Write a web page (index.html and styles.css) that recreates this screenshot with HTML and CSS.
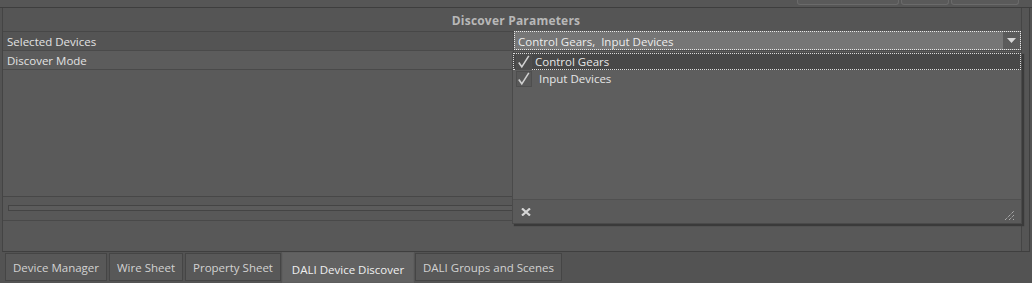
FILE: index.html
```html
<!DOCTYPE html>
<html>
<head>
<meta charset="utf-8">
<link rel="stylesheet" href="styles.css">
</head>
<body>
<div class="app">
  <div class="topbar">
    <div class="tbtn b1"></div>
    <div class="tbtn b2"></div>
    <div class="tbtn b3"></div>
  </div>
  <div class="panel">
    <div class="main">
      <div class="title">Discover Parameters</div>
      <div class="row r1">
        <div class="label">Selected Devices</div>
        <div class="value">
          <div class="combo">
            <span class="combo-text">Control Gears,&nbsp; Input Devices</span>
            <span class="combo-arrow"><svg width="9" height="5" viewBox="0 0 9 5"><path d="M0 0h9L4.5 5z" fill="#d8d8d8"/></svg></span>
          </div>
        </div>
      </div>
      <div class="row r2">
        <div class="label">Discover Mode</div>
        <div class="value"></div>
      </div>
      <div class="empty">
        <div class="lcol"></div>
        <div class="rcol"></div>
      </div>
      <div class="hscroll"><div class="track"></div></div>
      <div class="gap"></div>
    </div>
    <div class="vstrip"></div>
  </div>
  <div class="tabs">
    <div class="tab t1">Device Manager</div>
    <div class="tab t2">Wire Sheet</div>
    <div class="tab t3">Property Sheet</div>
    <div class="tab t4 active">DALI Device Discover</div>
    <div class="tab t5">DALI Groups and Scenes</div>
  </div>

  <div class="popup">
    <div class="list">
      <div class="item sel"><span class="chk box"><svg width="16" height="16" viewBox="0 0 16 16"><path d="M2 8.5l3.5 5L13.5 1" fill="none" stroke="#d0d0d0" stroke-width="1.8"/></svg></span><span class="itxt">Control Gears</span></div>
      <div class="item"><span class="chk box"><svg width="16" height="16" viewBox="0 0 16 16"><path d="M2 8.5l3.5 5L13.5 1" fill="none" stroke="#d0d0d0" stroke-width="1.8"/></svg></span><span class="itxt two">Input Devices</span></div>
    </div>
    <div class="pfoot">
      <svg class="xicon" width="10" height="8" viewBox="0 0 10 8"><path d="M1 0.5L9 7.5M9 0.5L1 7.5" stroke="#d6d6d6" stroke-width="2.2"/></svg>
      <svg class="grip" width="11" height="11" viewBox="0 0 11 11"><path d="M1 10L10 1M5 10L10 5M9 10L10 9" stroke="#cfcfcf" stroke-width="1" stroke-dasharray="1 1"/></svg>
    </div>
  </div>
</div>
</body>
</html>
```

FILE: styles.css
```css
* { box-sizing: border-box; }
html, body { margin: 0; padding: 0; }
body {
  width: 1032px;
  height: 283px;
  background: #535353;
  font-family: "Open Sans", "Noto Sans", sans-serif;
  font-size: 11.5px;
  color: #e2e2e2;
  overflow: hidden;
}
.app {
  position: relative;
  width: 1032px;
  height: 283px;
  display: flex;
  flex-direction: column;
}
.topbar {
  height: 8px;
  display: flex;
  gap: 2px;
  padding-left: 797px;
  border-bottom: 1px solid #3e3e3e;
  background: #565656;
}
.tbtn {
  height: 5px;
  border: 1px solid #6a6a6a;
  border-top: none;
  border-radius: 0 0 3px 3px;
  background: #5a5a5a;
}
.b1 { width: 102px; }
.b2 { width: 48px; }
.b3 { width: 68px; }
.panel {
  margin-left: 2px;
  width: 1028px;
  height: 244px;
  display: flex;
  border-left: 1px solid #444;
  border-bottom: 1px solid #3f3f3f;
}
.main {
  width: 1019px;
  display: flex;
  flex-direction: column;
  border-right: 1px solid #454545;
}
.vstrip {
  flex: 1;
  background: #555;
  border-right: 1px solid #404040;
}
.title {
  height: 24px;
  line-height: 26px;
  text-align: center;
  font-weight: bold;
  font-size: 12px;
  color: #b8b8b8;
  background: #555;
  border-bottom: 1px solid #474747;
  padding-left: 8px;
  letter-spacing: 0.2px;
}
.row {
  display: flex;
  height: 19px;
  border-bottom: 1px solid #4a4a4a;
}
.r1 { background: #545454; }
.r2 { background: #5c5c5c; }
.label {
  width: 511px;
  padding-left: 4px;
  line-height: 20px;
  border-right: 1px solid #4a4a4a;
}
.value { flex: 1; }
.combo {
  height: 19px;
  margin-top: -1px;
  display: flex;
  border: 1px dotted #e8e8e8;
  background: #767676;
}
.combo-text {
  flex: 1;
  padding-left: 3px;
  line-height: 19px;
  color: #ececec;
}
.combo-arrow {
  width: 17px;
  background: #5b5b5b;
  display: flex;
  align-items: center;
  justify-content: center;
}
.empty {
  flex: 1;
  display: flex;
  background: #5a5a5a;
  border-bottom: 1px solid #474747;
}
.lcol { width: 511px; border-right: 1px solid #4a4a4a; }
.rcol { flex: 1; }
.hscroll {
  height: 24px;
  flex: none;
  padding: 8px 5px 0 5px;
  background: #585858;
  border-bottom: 1px solid #494949;
}
.track {
  height: 6px;
  border: 1px solid #444;
  background: #5c5c5c;
}
.gap {
  height: 30px;
  flex: none;
  background: #585858;
}
.tabs {
  display: flex;
  align-items: flex-end;
  gap: 2px;
  padding-left: 5px;
  height: 31px;
}
.tab {
  height: 28px;
  margin-bottom: 2px;
  text-align: center;
  line-height: 28px;
  background: #585858;
  border: 1px solid #454545;
  color: #d2d2d2;
}
.t1 { width: 102px; }
.t2 { width: 74px; }
.t3 { width: 96px; }
.t4 { width: 132px; }
.t5 { width: 147px; }
.tab.active {
  height: 31px;
  margin: 0 -1px;
  line-height: 33px;
  background: #626262;
  color: #f0f0f0;
  border-color: #5e5e5e;
}
.popup {
  position: absolute;
  left: 512px;
  top: 52px;
  width: 510px;
  height: 172px;
  background: #5a5a5a;
  border: 1px solid #4a4a4a;
  box-shadow: 2px 2px 1px #3a3a3a;
  display: flex;
  flex-direction: column;
}
.list {
  flex: 1;
  background: #5e5e5e;
  border-bottom: 1px solid #505050;
}
.item {
  height: 17px;
  display: flex;
  align-items: center;
  padding-left: 3px;
}
.item.sel {
  background: #484848;
  border: 1px dotted #dcdcdc;
  padding-left: 2px;
}
.chk {
  width: 16px;
  height: 16px;
  display: flex;
  align-items: center;
  justify-content: center;
}
.chk.box {
  border: 1px solid #4e4e4e;
  background: #585858;
}
.sel .chk.box { background: #4c4c4c; }
.itxt {
  padding-left: 3px;
  line-height: 18px;
  color: #e6e6e6;
}
.itxt.two { padding-left: 7px; }
.pfoot {
  height: 23px;
  display: flex;
  align-items: center;
  justify-content: space-between;
  padding: 0 6px 0 8px;
  background: #5a5a5a;
}
.grip { align-self: flex-end; margin-bottom: 2px; }
```
